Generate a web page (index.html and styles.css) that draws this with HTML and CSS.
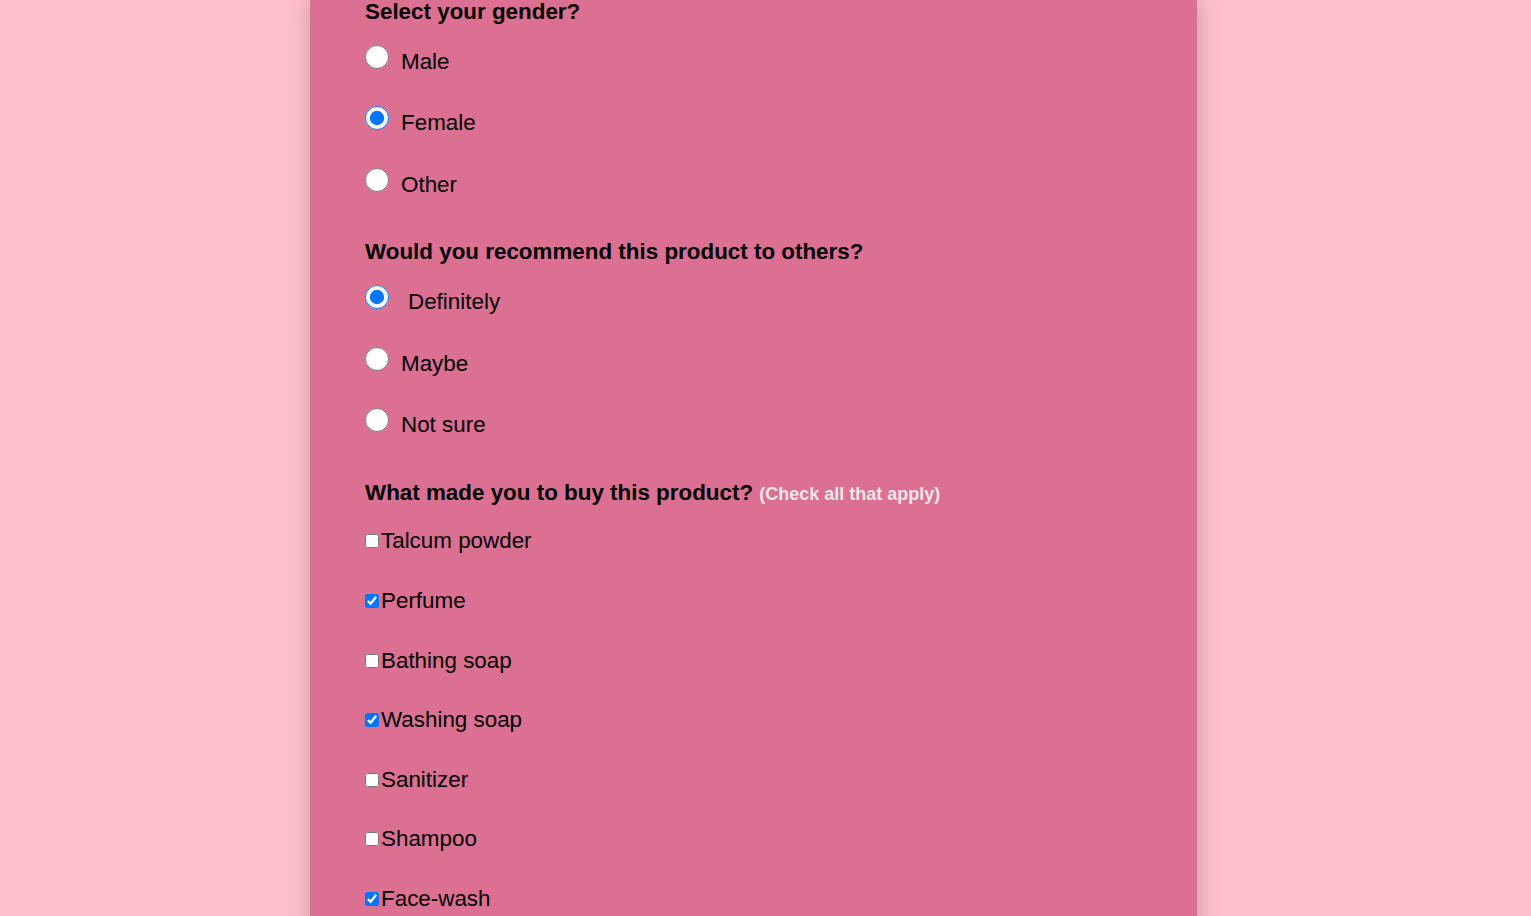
FILE: index.html
```html
<!DOCTYPE html>
<html lang="en">
<head>
<meta charset="utf-8">
<title>Product Survey</title>
<link rel="stylesheet" href="styles.css">
</head>
<body>
<main class="card">
  <section class="group">
    <h3 class="question">Select your gender?</h3>
    <div class="options radios">
      <label class="opt"><input type="radio" name="gender"><span>Male</span></label>
      <label class="opt"><input type="radio" name="gender" checked><span>Female</span></label>
      <label class="opt"><input type="radio" name="gender"><span>Other</span></label>
    </div>
  </section>
  <section class="group">
    <h3 class="question">Would you recommend this product to others?</h3>
    <div class="options radios">
      <label class="opt"><input type="radio" name="rec" checked><span class="wide">Definitely</span></label>
      <label class="opt"><input type="radio" name="rec"><span>Maybe</span></label>
      <label class="opt"><input type="radio" name="rec"><span>Not sure</span></label>
    </div>
  </section>
  <section class="group">
    <h3 class="question">What made you to buy this product? <span class="hint">(Check all that apply)</span></h3>
    <div class="options checks">
      <label class="opt"><input type="checkbox"><span>Talcum powder</span></label>
      <label class="opt"><input type="checkbox" checked><span>Perfume</span></label>
      <label class="opt"><input type="checkbox"><span>Bathing soap</span></label>
      <label class="opt"><input type="checkbox" checked><span>Washing soap</span></label>
      <label class="opt"><input type="checkbox"><span>Sanitizer</span></label>
      <label class="opt"><input type="checkbox"><span>Shampoo</span></label>
      <label class="opt"><input type="checkbox" checked><span>Face-wash</span></label>
    </div>
  </section>
</main>
</body>
</html>
```
FILE: styles.css
```css
html, body {
  margin: 0;
  height: 100%;
  overflow: hidden;
}
body {
  background: #ffc0cb;
  font-family: "Liberation Sans", Arial, sans-serif;
  color: #000;
}
.card {
  width: 887px;
  margin-left: 310px;
  box-sizing: border-box;
  padding: 0 55px 40px;
  background: #db7093;
  box-shadow: 0 0 22px rgba(0, 0, 0, 0.22);
  min-height: 1100px;
  display: flex;
  flex-direction: column;
  gap: 42.6px;
}
.group {
  display: flex;
  flex-direction: column;
}
.group:first-child {
  margin-top: -1px;
}
.question {
  margin: 0;
  font-size: 22.4px;
  line-height: 25px;
  font-weight: bold;
}
.hint {
  font-size: 18px;
  color: #ebe6e8;
}
.options {
  display: flex;
  flex-direction: column;
}
.radios {
  margin-top: 20.5px;
  gap: 32.7px;
}
.checks {
  margin-top: 21.5px;
  gap: 34.6px;
}
.opt {
  display: flex;
  align-items: baseline;
  font-size: 22.4px;
  line-height: 25px;
}
.radios .opt {
  height: 29px;
}
.checks .opt {
  height: 25px;
}
.radios input {
  width: 24px;
  height: 24px;
  margin: 0 12px 0 0;
}
.checks input {
  width: 14px;
  height: 14px;
  margin: 3px 2px 4px 0;
}
.wide {
  padding-left: 7px;
}
```
